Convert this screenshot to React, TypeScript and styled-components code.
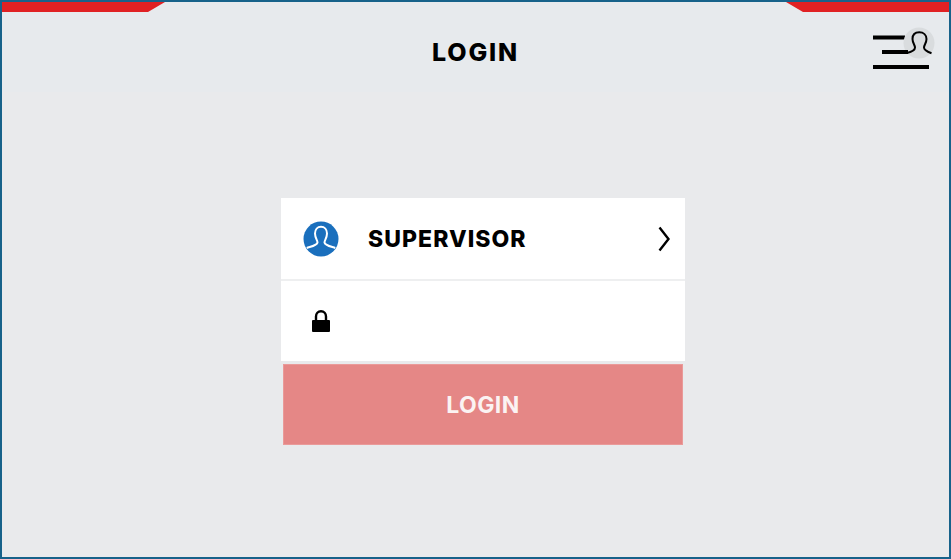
import { createGlobalStyle, styled } from 'styled-components'

const GlobalStyle = createGlobalStyle`
  html, body {
    margin: 0;
    padding: 0;
    background: #e9eaec;
    font-family: "Inter", "Liberation Sans", sans-serif;
  }
`

const Frame = styled.div`
  box-sizing: border-box;
  width: 951px;
  height: 559px;
  border: 2px solid #17628a;
  background: #e9eaec;
  display: flex;
  flex-direction: column;
`

const Header = styled.header`
  height: 90px;
  background: #e7eaed;
  display: flex;
  flex-direction: column;
`

const Strips = styled.div`
  display: flex;
  justify-content: space-between;
  height: 10px;
`

const Strip = styled.div<{ $side: 'left' | 'right' }>`
  height: 10px;
  width: 163px;
  background: #e02123;
  clip-path: ${(p) =>
    p.$side === 'left'
      ? 'polygon(0 0, 100% 0, 146px 100%, 0 100%)'
      : 'polygon(0 0, 100% 0, 100% 100%, 17px 100%)'};
`

const HeaderRow = styled.div`
  flex: 1;
  display: grid;
  grid-template-columns: 1fr auto 1fr;
  align-items: start;
`

const Title = styled.h1`
  grid-column: 2;
  margin: 26px 0 0;
  font-size: 25px;
  line-height: 28px;
  font-weight: 800;
  letter-spacing: 1.8px;
  color: #000;
`

const MenuButton = styled.button`
  grid-column: 3;
  justify-self: end;
  width: 66px;
  height: 46px;
  margin: 14px 13px 0 0;
  padding: 0;
  border: 0;
  background: none;
`

const Main = styled.main`
  flex: 1;
  padding: 106px 0 0 279px;
`

const Card = styled.section`
  width: 404px;
  display: flex;
  flex-direction: column;
`

const Row = styled.div`
  height: 80px;
  background: #fff;
  display: flex;
  align-items: center;
`

const UserRow = styled(Row)`
  height: 81px;
  padding: 0 15px 0 22px;
  border-bottom: 2px solid #eeeff0;
  box-sizing: content-box;
`

const PasswordRow = styled(Row)`
  padding-left: 31px;
`

const UserName = styled.span`
  flex: 1;
  margin-left: 29px;
  padding-top: 1px;
  font-size: 23px;
  font-weight: 800;
  letter-spacing: 1.05px;
  color: #000;
`

const LoginButton = styled.button`
  height: 81px;
  margin: 3px 2px 0;
  border: 1px solid #ea9a99;
  padding: 0;
  background: #e58786;
  color: #fbf3f3;
  font-family: inherit;
  font-size: 23px;
  font-weight: 700;
  letter-spacing: 0.4px;
`

const MenuIcon = () => (
  <svg width="66" height="46" viewBox="0 0 66 46" fill="none" stroke="#000">
    <path d="M3 11.5h32M3 41h56" strokeWidth="4" />
    <circle cx="49" cy="17" r="15.5" fill="#d9dcde" stroke="none" />
    <path d="M12 26h26" strokeWidth="4" />
    <path
      d="M37 27C41 26 45 24.5 45 21.5C45 19 42.5 17 42.5 13C42.5 9 45 6.3 49.3 6.3C53.5 6.3 56.5 9 56.5 13C56.5 17 54 19 54 21.5C54 24.5 58 26 61.5 27.3"
      strokeWidth="2"
    />
  </svg>
)

const UserIcon = () => (
  <svg width="36" height="36" viewBox="0 0 36 36" fill="none">
    <circle cx="18" cy="18" r="17.5" fill="#1a6fbd" />
    <path
      d="M3.7 27C8 25.5 14 24.5 14.5 21.5C14.7 19.5 12 17 12 12.5C12 8.5 14.5 5.7 18 5.7C21.5 5.7 24 8.5 24 12.5C24 17 21.3 19.5 21.5 21.5C22 24.5 28 25.5 32.3 27"
      stroke="#fff"
      strokeWidth="2"
    />
  </svg>
)

const LockIcon = () => (
  <svg width="18" height="22" viewBox="0 0 18 22">
    <path d="M4 11V6.5C4 3.5 6 1.2 9 1.2S14 3.5 14 6.5V11" fill="none" stroke="#000" strokeWidth="2.4" />
    <rect x="0" y="10" width="18" height="12" rx="1" fill="#000" />
  </svg>
)

const ChevronIcon = () => (
  <svg width="12" height="26" viewBox="0 0 12 26" fill="none">
    <path d="M1.5 1.5L10.5 13L1.5 24.5" stroke="#000" strokeWidth="2.4" />
  </svg>
)

export default function App() {
  return (
    <Frame>
      <GlobalStyle />
      <Header>
        <Strips>
          <Strip $side="left" />
          <Strip $side="right" />
        </Strips>
        <HeaderRow>
          <Title>LOGIN</Title>
          <MenuButton aria-label="menu">
            <MenuIcon />
          </MenuButton>
        </HeaderRow>
      </Header>
      <Main>
        <Card>
          <UserRow>
            <UserIcon />
            <UserName>SUPERVISOR</UserName>
            <ChevronIcon />
          </UserRow>
          <PasswordRow>
            <LockIcon />
          </PasswordRow>
          <LoginButton>LOGIN</LoginButton>
        </Card>
      </Main>
    </Frame>
  )
}
